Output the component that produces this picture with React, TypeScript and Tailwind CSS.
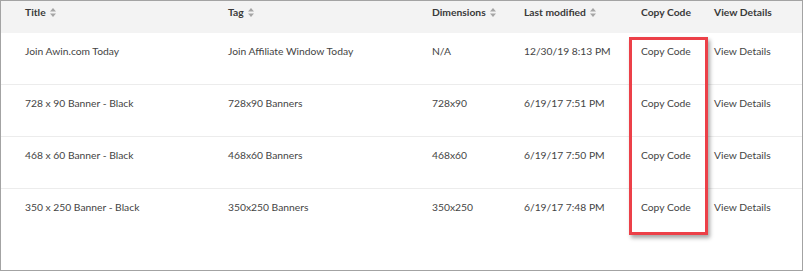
import React from "react";

const SortIcon = () => (
  <svg width="6" height="9" viewBox="0 0 6 9" className="ml-[4px] inline-block">
    <path d="M3 0 L6 3.5 H0 Z" fill="#a5a5a5" />
    <path d="M3 9 L6 5.5 H0 Z" fill="#a5a5a5" />
  </svg>
);

const rows = [
  ["Join Awin.com Today", "Join Affiliate Window Today", "N/A", "12/30/19 8:13 PM"],
  ["728 x 90 Banner - Black", "728x90 Banners", "728x90", "6/19/17 7:51 PM"],
  ["468 x 60 Banner - Black", "468x60 Banners", "468x60", "6/19/17 7:50 PM"],
  ["350 x 250 Banner - Black", "350x250 Banners", "350x250", "6/19/17 7:48 PM"],
];

const cols = "grid grid-cols-[203px_204px_92px_117px_73px_1fr] pl-[24px]";

export default function App() {
  return (
    <div
      className="relative w-[803px] h-[271px] border border-[#a3a3a3] bg-white text-[#444] text-[10.3px] overflow-hidden"
      style={{ fontFamily: "Lato, 'Open Sans', sans-serif" }}
    >
      <div className={`${cols} items-start h-[32px] bg-[#f3f3f3] pt-[3px] font-bold text-[#3a3a3a] leading-[16px]`}>
        <div className="flex items-center">Title<SortIcon /></div>
        <div className="flex items-center">Tag<SortIcon /></div>
        <div className="flex items-center">Dimensions<SortIcon /></div>
        <div className="flex items-center">Last modified<SortIcon /></div>
        <div className="flex items-center">Copy Code</div>
        <div className="flex items-center">View Details</div>
      </div>
      {rows.map((r, i) => (
        <div
          key={i}
          className={`${cols} h-[52px] pt-[10px] leading-[16px] ${i < rows.length - 1 ? "border-b border-[#ececec]" : ""}`}
        >
          <div>{r[0]}</div>
          <div>{r[1]}</div>
          <div>{r[2]}</div>
          <div>{r[3]}</div>
          <div>Copy Code</div>
          <div>View Details</div>
        </div>
      ))}
      <div className="absolute left-[628px] top-[36px] w-[79px] h-[198px] border-[3px] border-[#ec4048] shadow-[2px_3px_4px_rgba(0,0,0,0.35)]" />
    </div>
  );
}
